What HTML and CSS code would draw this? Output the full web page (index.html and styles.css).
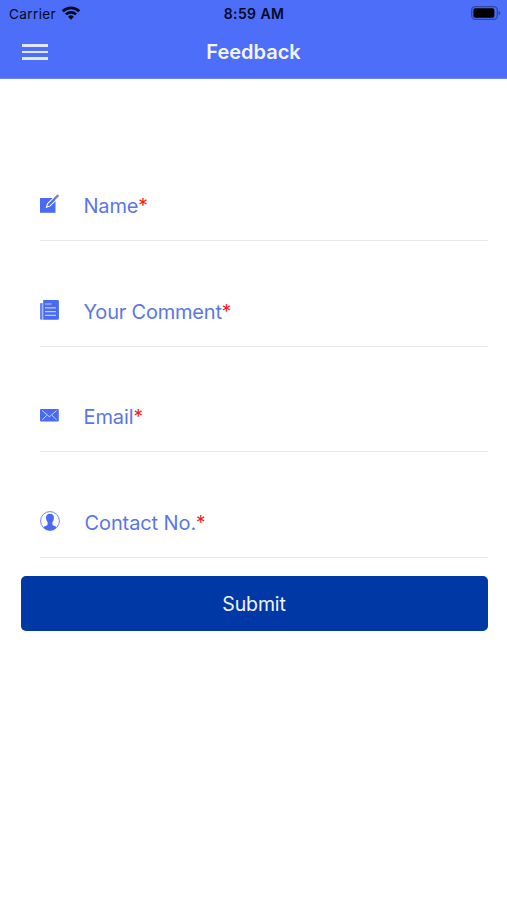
FILE: index.html
```html
<!DOCTYPE html>
<html lang="en">
<head>
<meta charset="utf-8">
<meta name="viewport" content="width=device-width, initial-scale=1">
<title>Feedback</title>
<link rel="stylesheet" href="styles.css">
</head>
<body>
<header class="header">
  <div class="status">
    <div class="carrier"><span>Carrier</span>
      <svg class="wifi" width="18" height="14" viewBox="0 0 18 14" fill="none" stroke="#05091f" stroke-width="2.7"><path d="M.8 5.200a11.700 11.700 0 0 1 16.400 0"/><path d="M3.900 8.400a7.300 7.300 0 0 1 10.200 0"/><path d="M9 13.700 6.100 10.800a4.100 4.100 0 0 1 5.800 0z" fill="#05091f" stroke="none"/></svg>
    </div>
    <time class="time">8:59 AM</time>
    <svg class="battery" width="30" height="14" viewBox="0 0 30 14"><rect x=".7" y=".7" width="25.6" height="12.6" rx="3.5" fill="none" stroke="#2f469f" stroke-width="1.3"/><rect x="2.4" y="2.3" width="21" height="9.4" rx="1.8" fill="#000"/><path d="M27.6 4.7c2.2.8 2.2 3.8 0 4.6z" fill="#2f469f"/></svg>
  </div>
  <nav class="bar">
    <button class="menu" aria-label="Menu"><i></i><i></i><i></i></button>
    <h1 class="title">Feedback</h1>
  </nav>
</header>
<main class="form">
  <label class="field">
    <svg class="icon" width="20" height="20" viewBox="0 0 20 20"><path d="M0 4h15.500v14.800H0z" fill="#496af2"/><path d="m6.400 13.300 1.300-3.800 5.700-5.600 2.400 2.400-5.600 5.600z" fill="#496af2" stroke="#fff" stroke-width="1.100"/><path d="m14.500 4.900 3.200-3.200" stroke="#6a78dc" stroke-width="2.300" stroke-linecap="round"/></svg>
    <span class="label name">Name</span><span class="star">*</span>
  </label>
  <label class="field">
    <svg class="icon" width="20" height="20" viewBox="0 0 20 20"><path d="M3.200 0h14.500q1.200 0 1.200 1.200v17.400q0 1.200-1.200 1.200H3.200z" fill="#496af2"/><path d="M2.600 3H1.200Q0 3 0 4.200v14.400q0 1.200 1.200 1.200h1.400z" fill="#6884f4"/><path d="M5 4h6.500M5 7.800h11M5 11.600h11M5 15.400h11" stroke="#c5d0ff" stroke-width="1.200"/></svg>
    <span class="label comment">Your Comment</span><span class="star">*</span>
  </label>
  <label class="field">
    <svg class="icon" width="20" height="20" viewBox="0 0 20 20"><rect y="3.900" width="18.800" height="12.700" rx="1" fill="#496af2"/><path d="m2.200 5.600 7.200 6.100 7.200-6.100M2.200 14.900l4.600-4.500M16.600 14.900 12 10.400" fill="none" stroke="#cbd5ff" stroke-width="1"/></svg>
    <span class="label email">Email</span><span class="star">*</span>
  </label>
  <label class="field">
    <svg class="icon" width="20" height="20" viewBox="0 0 20 20"><circle cx="10" cy="10" r="9.400" fill="#fff" stroke="#7288ee"/><path d="M10 2.800c2.800 0 4.100 1.700 3.900 4.200 0 1.600-.5 3-1.500 4.200v2.400c.2 1.200 2.500 1.400 4.200 2.600Q14 19.400 10 19.400T3.400 16.200c1.700-1.200 4-1.400 4.200-2.600v-2.400C6.600 10 6.100 8.600 6.100 7c-.2-2.500 1.100-4.200 3.900-4.200z" fill="#496af2"/></svg>
    <span class="label contact">Contact No.</span><span class="star">*</span>
  </label>
  <button class="submit">Submit</button>
</main>
</body>
</html>
```
FILE: styles.css
```css
* { box-sizing: border-box; }
body {
  margin: 0;
  background: #fff;
  font-family: Inter, "Liberation Sans", sans-serif;
}
button { border: 0; padding: 0; font: inherit; }
.header {
  height: 79px;
  background: #4c6ef8;
  border-bottom: 1px solid #6985fa;
}
.status {
  display: grid;
  grid-template-columns: 1fr auto 1fr;
  align-items: center;
  height: 27px;
  padding: 0 6px 0 9px;
  color: #05091f;
  font-size: 13.5px;
}
.carrier {
  display: flex;
  align-items: center;
  gap: 6px;
  letter-spacing: .4px;
}
.wifi { margin-top: -2px; }
.time {
  margin-left: -2px;
  font-weight: 600;
  font-size: 14px;
  letter-spacing: .4px;
}
.battery { justify-self: end; margin-top: -1px; }
.bar {
  display: grid;
  grid-template-columns: 1fr auto 1fr;
  align-items: center;
  height: 50px;
  padding: 0 22px;
}
.menu {
  display: flex;
  flex-direction: column;
  gap: 4px;
  width: 26px;
  background: none;
}
.menu i { height: 2.5px; background: #e2e8ff; }
.title {
  margin: 0;
  color: #f4f6ff;
  font-size: 20px;
  font-weight: 600;
  line-height: 24px;
}
.form { padding: 56.5px 19.5px 0 20.5px; }
.field {
  display: flex;
  align-items: flex-end;
  height: 105.5px;
  margin-left: 19.5px;
  padding-bottom: 21px;
  border-bottom: 1px solid #e8e8e8;
  line-height: 26px;
  font-size: 20px;
}
.icon { flex: none; margin: 0 23.5px 5px 0; }
.label { color: #5a76e8; letter-spacing: -.2px; }
.email { letter-spacing: -.1px; }
.contact { margin-left: 1px; letter-spacing: -.1px; }
.star { color: #fb1717; font-size: 19px; }
.submit {
  display: block;
  width: 100%;
  height: 55px;
  margin-top: 18.5px;
  border-radius: 5px;
  background: #0039a6;
  color: #f0f4ff;
  font-size: 19.5px;
  letter-spacing: -.15px;
}
```
